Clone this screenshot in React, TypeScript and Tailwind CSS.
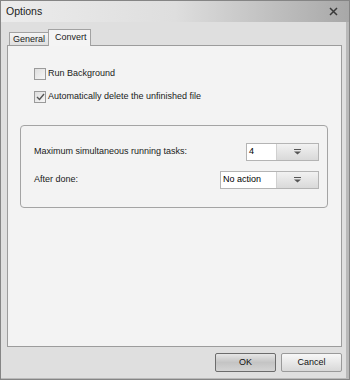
import React from "react";

const font = { fontFamily: '"Liberation Sans", Arial, sans-serif' };

function DropGlyph() {
  return (
    <svg width="9" height="6" viewBox="0 0 9 6">
      <rect x="1" y="0" width="7" height="1" fill="#555" />
      <path d="M1 2.5 H8 L4.5 5.5 Z" fill="#555" />
    </svg>
  );
}

function Box({ value, textW }: { value: string; textW: string }) {
  return (
    <div className="flex h-[18px] border border-[#b4b4b4] bg-white">
      <div className={`${textW} flex items-center pl-[2px] text-[9px] text-black bg-white`}>{value}</div>
      <div className="w-[42px] flex items-center justify-center border-l border-[#d0d0d0] bg-gradient-to-b from-[#f2f2f2] to-[#d9d9d9]">
        <DropGlyph />
      </div>
    </div>
  );
}

function Check({ checked, label }: { checked: boolean; label: string }) {
  return (
    <div className="flex items-center h-[13px] gap-[2px]">
      <div className="w-[12px] h-[12px] border border-[#9a9a9a] bg-gradient-to-br from-[#dedede] to-[#f6f6f6] flex items-center justify-center">
        {checked && (
          <svg width="9" height="8" viewBox="0 0 9 8">
            <path d="M1 4 L3.5 6.5 L8 1" stroke="#555" strokeWidth="1.4" fill="none" />
          </svg>
        )}
      </div>
      <span className="text-[9px] text-[#1a1a1a] leading-none">{label}</span>
    </div>
  );
}

export default function App() {
  return (
    <div className="w-[350px] h-[380px] flex flex-col bg-[#dfdfdf] border border-[#858585]" style={font}>
      <div className="h-[21px] flex items-center justify-between pl-[5px] pr-[11px] bg-gradient-to-r from-[#ececec] via-[#dedede] to-[#a8a8a8]">
        <span className="text-[10.5px] text-[#222]">Options</span>
        <svg width="9" height="9" viewBox="0 0 9 9">
          <path d="M1 1 L8 8 M8 1 L1 8" stroke="#3a3a3a" strokeWidth="1.5" />
        </svg>
      </div>
      <div className="flex-1 flex flex-col pl-[6px] pr-[4px] border-r-[3px] border-[#b9b9b9] border-b-[1px]">
        <div className="flex items-end h-[23px] pl-[2px]">
          <div className="h-[13px] w-[40px] border border-b-0 border-[#a2a2a2] bg-gradient-to-b from-[#f4f4f4] to-[#e0e0e0] text-[9px] text-[#1a1a1a] pl-[3px] leading-[12px]">
            General
          </div>
          <div className="h-[17px] w-[43px] -ml-[1px] border border-b-0 border-[#a2a2a2] bg-[#f4f4f4] text-[9px] text-[#1a1a1a] pl-[6px] leading-[14px] relative z-10 -mb-[1px]">
            Convert
          </div>
        </div>
        <div className="w-[335px] h-[302px] border border-[#9c9c9c] bg-[#f3f3f3] flex flex-col pt-[21px]">
          <div className="pl-[26px] flex flex-col gap-[10px]">
            <Check checked={false} label="Run Background" />
            <Check checked={true} label="Automatically delete the unfinished file" />
          </div>
          <div className="ml-[12px] mt-[22px] w-[308px] h-[83px] border border-[#a4a4a4] rounded-[4px] flex flex-col pl-[13px] pr-[8px] pt-[17px] gap-[10px]">
            <div className="flex items-center justify-between">
              <span className="text-[9px] text-[#1a1a1a]">Maximum simultaneous running tasks:</span>
              <Box value="4" textW="w-[29px]" />
            </div>
            <div className="flex items-center justify-between">
              <span className="text-[9px] text-[#1a1a1a]">After done:</span>
              <Box value="No action" textW="w-[55px]" />
            </div>
          </div>
        </div>
        <div className="flex justify-end gap-[5px] mt-[6px] pr-0">
          <div className="w-[61px] h-[19px] border border-[#6c6c6c] rounded-[2px] bg-gradient-to-b from-[#e6e6e6] via-[#c4c4c4] to-[#d4d4d4] flex items-center justify-center text-[9px] text-[#111]">
            OK
          </div>
          <div className="w-[61px] h-[19px] border border-[#9a9a9a] rounded-[2px] bg-gradient-to-b from-[#f8f8f8] via-[#e8e8e8] to-[#d8d8d8] flex items-center justify-center text-[9px] text-[#111]">
            Cancel
          </div>
        </div>
      </div>
    </div>
  );
}
